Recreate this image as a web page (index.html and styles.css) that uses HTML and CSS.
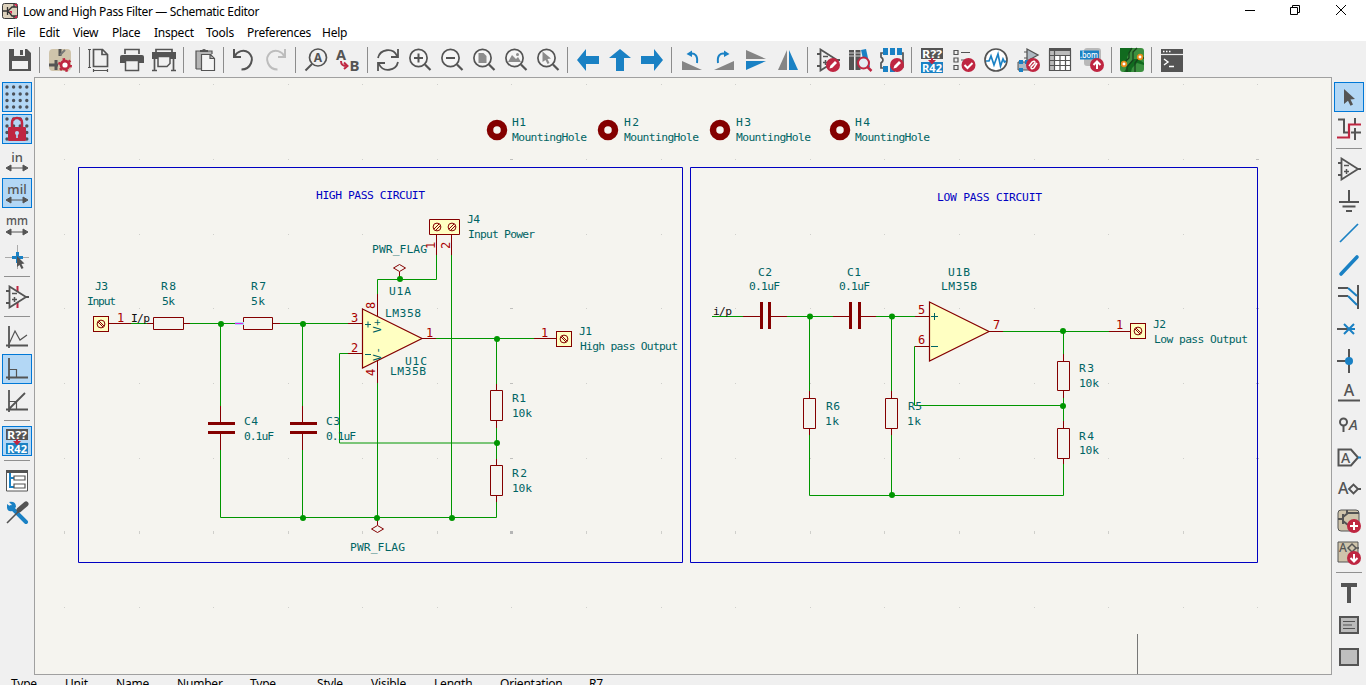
FILE: index.html
```html
<!DOCTYPE html>
<html lang="en">
<head>
<meta charset="utf-8">
<title>Low and High Pass Filter — Schematic Editor</title>
<link rel="stylesheet" href="styles.css">
</head>
<body>
<svg class="defs" width="0" height="0" aria-hidden="true">
  <symbol id="lens" viewBox="0 0 24 24"><circle cx="10.500" cy="10" r="8.600" fill="#f5f5f5" stroke="#545454" stroke-width="1.700"/><path d="M17 16.500 22.500 22" stroke="#545454" stroke-width="2.200" fill="none"/></symbol>
  <symbol id="opamp" viewBox="0 0 24 24"><path d="M4.500 1.500 21 12 4.500 22.500ZM1 6h3.500M1 18h3.500M21 12h3" fill="none" stroke="#545454" stroke-width="1.800"/><path d="M7 8.500h5M7 14.500h5M9.500 12v5" stroke="#545454" stroke-width="1.500"/></symbol>
  <symbol id="pencil" viewBox="0 0 24 24"><circle cx="17" cy="17" r="7" fill="#bf2641"/><path d="m13.500 20.500.8-2.800 4.700-4.700 2 2-4.700 4.700Z" fill="#fff"/></symbol>
  <symbol id="span" viewBox="0 0 24 24"><path d="M3 18h18M1 18l5-3v6ZM23 18l-5-3v6Z" fill="#545454" stroke="#545454" stroke-width="1"/></symbol>
  <symbol id="screw" viewBox="0 0 16 16"><rect x=".5" y=".5" width="15" height="15" class="body"/><circle cx="8" cy="8" r="3.900" class="pin"/><path d="m5 6 5 5M6 5l5 5" class="pin"/></symbol>
</svg>
<div class="window">
  <header class="titlebar">
    <svg class="appicon" viewBox="0 0 16 16"><rect x=".5" y=".5" width="15" height="15" rx="2" fill="#ddd2bd" stroke="#3b3b3b"/><path d="M1 8h4M5.500 4v8M6 8l4-4h5M6 8l4 5h5M12 4V1M12 13v2" stroke="#333" fill="none" stroke-width="1.300"/><path d="M12 1h3v3zM12 15h3v-3zM7 8h3v3z" fill="#d51d4b"/></svg>
    <span class="title">Low and High Pass Filter — Schematic Editor</span>
    <div class="winbtns">
      <svg viewBox="0 0 12 12"><path d="M2 6.500h10"/></svg>
      <svg viewBox="0 0 12 12"><path d="M1.500 3.500h7v7h-7zM3.500 3.500v-2h7v7h-2"/></svg>
      <svg viewBox="0 0 12 12"><path d="m1 1 10 10M11 1 1 11"/></svg>
    </div>
  </header>
  <nav class="menubar">
    <span class="m-file">File</span><span class="m-edit">Edit</span><span class="m-view">View</span><span class="m-place">Place</span><span class="m-inspect">Inspect</span><span class="m-tools">Tools</span><span class="m-prefs">Preferences</span><span class="m-help">Help</span>
  </nav>
  <div class="toolbar">
    <svg viewBox="0 0 24 24"><path d="M1 1h18l4 4v18H1z" fill="#545454"/><path d="M6 1h11v7H6zM4 13h16v8H4z" fill="#f0f0f0"/><path d="M12 2h3v5h-3z" fill="#545454"/></svg>
    <i class="sep"></i>
    <svg viewBox="0 0 24 24"><rect x="1" y="1" width="22" height="22" rx="4" fill="#cfc4ab"/><path d="M12 1v7M1 17h9M8 12v10" stroke="#545454" stroke-width="3"/><path d="M12 7l5-5" stroke="#777" stroke-width="2"/><circle cx="17" cy="17" r="4" fill="#fff" stroke="#bf2641" stroke-width="2.800"/><circle cx="17" cy="17" r="6" fill="none" stroke="#bf2641" stroke-width="2" stroke-dasharray="2.500 3.780"/></svg>
    <i class="sep"></i>
    <svg viewBox="0 0 24 24"><path d="M5.500 1.500h9l5 5v12h-14zM14 1.500v5h5.500" class="ln"/><path d="M1.500 1v19M0 1.500h3M0 19.500h3M5 22.500h15M5.500 21v3M19.500 21v3" class="th"/></svg>
    <svg viewBox="0 0 24 24"><path d="M5 6V1.500h14V6" class="ln"/><path d="M2 7h20q2 0 2 2v6H0V9q0-2 2-2z" fill="#545454"/><path d="M5.500 12.500h13v10h-13z" fill="#f0f0f0" stroke="#545454" stroke-width="1.500"/></svg>
    <svg viewBox="0 0 24 24"><path d="M4 5V1.500h16V5M2.500 10v13M21.500 10v13M0 22.500h5M19 22.500h5" class="ln"/><path d="M0 4h24v7H0z" fill="#545454"/><path d="M6 8.500h12v7l-3 3H6z" fill="#f0f0f0" stroke="#545454" stroke-width="1.500"/></svg>
    <i class="sep"></i>
    <svg viewBox="0 0 24 24"><path d="M4 3h16v18H4z" fill="#b5b5b5"/><path d="M4 21V3h16v3M4 21h5" class="th"/><path d="M8 4V2h2q2-2 4 0h2v2z" fill="#545454"/><path d="M9.500 6.500h9l4 4v12h-13zM18 6.500v4h4.500" fill="#f4f4f4" stroke="#545454" stroke-width="1.200"/></svg>
    <i class="sep"></i>
    <svg viewBox="0 0 24 24"><path d="M2 1v8h7M2.500 8.500C5 3 12 1 16.500 4.500c7 6 2 17-7 17" class="u"/></svg>
    <svg viewBox="0 0 24 24"><path d="M21 1v8h-7M20.500 8.500C18 3 11 1 6.500 4.500c-7 6-2 17 7 17" class="u dis"/></svg>
    <i class="sep"></i>
    <svg viewBox="0 0 24 24"><circle cx="14" cy="9.500" r="8.500" class="ln"/><path d="m8 16-6.500 6.500" stroke="#545454" stroke-width="2"/><text x="14" y="14" text-anchor="middle" class="ic-b" font-size="12">A</text></svg>
    <svg viewBox="0 0 24 24"><text x="0" y="11.500" class="ic-b" font-size="14.500">A</text><text x="13.500" y="23" class="ic-b" font-size="15">B</text><path d="M5 13c0 4 2 5 6 5M8 14.500 11.500 18 8 21" fill="none" stroke="#bf2641" stroke-width="2"/></svg>
    <i class="sep"></i>
    <svg viewBox="0 0 24 24"><path d="M2 10C4 1 17-1 21 8M22 1v8h-7M22 14c-2 9-15 11-19 2M2 23v-8h7" class="u2"/></svg>
    <svg viewBox="0 0 24 24"><use href="#lens"/><path d="M6 10h9M10.500 5.500v9" stroke="#545454" stroke-width="2"/></svg>
    <svg viewBox="0 0 24 24"><use href="#lens"/><path d="M6 10h9" stroke="#545454" stroke-width="2"/></svg>
    <svg viewBox="0 0 24 24"><use href="#lens"/><path d="M6.500 5h5l3 3v7h-8z" fill="#8c8c8c"/></svg>
    <svg viewBox="0 0 24 24"><use href="#lens"/><path d="M4 14 8 7l4 4 2-2 3 5z" fill="#8c8c8c"/><circle cx="13.500" cy="6.500" r="1.500" fill="#8c8c8c"/></svg>
    <svg viewBox="0 0 24 24"><use href="#lens"/><path d="m6.500 3.500 8.500 7-3.500.5 2 4-2 1-2-4-3 2z" fill="#8c8c8c"/></svg>
    <i class="sep"></i>
    <svg viewBox="0 0 24 24"><path d="M1 12 10 1v7h13v8H10v7z" class="bl"/></svg>
    <svg viewBox="0 0 24 24"><path d="m12 1 11 9h-7v13H8V10H1z" class="bl"/></svg>
    <svg viewBox="0 0 24 24"><path d="M23 12 14 1v7H1v8h13v7z" class="bl"/></svg>
    <i class="sep"></i>
    <svg viewBox="0 0 24 24"><path d="M2 13v9h20z" fill="#858585"/><path d="M9 6c6-2 9 2 8 9" class="bs"/><path d="M6.500 6 12 2.500V9z" class="bl"/></svg>
    <svg viewBox="0 0 24 24"><path d="M22 13v9H2z" fill="#858585"/><path d="M14 6C8 4 5 8 6 15" class="bs"/><path d="M17.500 6 12 2.500V9z" class="bl"/></svg>
    <svg viewBox="0 0 24 24"><path d="M2 2v9h20z" fill="#858585"/><path d="M2 22v-9h20z" class="bl"/></svg>
    <svg viewBox="0 0 24 24"><path d="M11 2v20H2z" fill="#858585"/><path d="M13 2v20h9z" class="bl"/></svg>
    <i class="sep"></i>
    <svg viewBox="0 0 24 24"><use href="#opamp"/><use href="#pencil"/></svg>
    <svg viewBox="0 0 24 24"><path d="M1 2h5v20H1zM7.500 2h5v20h-5z" fill="#545454"/><path d="M1 5h12M1 8h12" stroke="#ccc"/><path d="m13 2 5-1 4 18-5 1z" fill="#1a81c4"/><circle cx="15.500" cy="15" r="5.500" fill="#e5edf3" stroke="#bf2641" stroke-width="2"/><path d="m19.500 19 4 4" stroke="#bf2641" stroke-width="2.500"/></svg>
    <svg viewBox="0 0 24 24"><path d="M3 5H1v4q4 3 0 6v5h2M21 5h2v14h-2" class="ln"/><path d="M3 0h5v7H3zM10 0h5v7h-5zM17 0h5v7h-5zM3 18h5v6H3zM10 18h5v6h-5z" class="bl"/><use href="#pencil"/></svg>
    <i class="sep"></i>
    <svg viewBox="0 0 24 24"><path d="M1 0h22v11H1z" fill="#545454"/><path d="M1 14h22v11H1z" fill="#1a81c4"/><path d="M11 10h2v2h3l-4 4.500-4-4.500h3z" fill="#bf2641"/><text x="2" y="9.500" class="ic-b wh" font-size="11" textLength="20" lengthAdjust="spacingAndGlyphs">R??</text><text x="2" y="23.500" class="ic-b wh" font-size="11" textLength="20" lengthAdjust="spacingAndGlyphs">R42</text></svg>
    <svg viewBox="0 0 24 24"><path d="M2 2.500h4v4H2zM2 10h4v4H2zM2 17.500h4v4H2zM9 4.500h9M9 12h6" class="th"/><circle cx="16.500" cy="17" r="7" fill="#bf2641"/><path d="m12.500 17 3 3 5-5" stroke="#fff" stroke-width="2" fill="none"/></svg>
    <svg viewBox="0 0 24 24"><circle cx="12" cy="12" r="11" fill="#fff" stroke="#545454" stroke-width="1.700"/><path d="M2 13h3l2-5 3 9 4-11 2.500 12 2.500-7 1.500 3 1.500-1" fill="none" stroke="#1a81c4" stroke-width="1.700"/></svg>
    <svg viewBox="0 0 24 24"><path d="m11 1 11 6-11 6z" fill="#aeb9c2" stroke="#545454" stroke-width="1.300"/><path d="M8 4h3M8 10h3" class="th"/><path d="M2 14h14v8H2z" fill="#aeb9c2" stroke="#545454"/><path d="M3 12h4v4H3zM9 12h4v4H9zM3 20h4v4H3z" class="bl"/><circle cx="17" cy="17" r="7" fill="#bf2641"/><path d="m13 18 3-4q3-2 3 1l-2 2M21 15l-3 5q-3 2-3-1l2-2" fill="none" stroke="#fff" stroke-width="1.500"/></svg>
    <svg viewBox="0 0 24 24"><path d="M1.500 1.500h21v21h-21z" fill="#fff"/><path d="M1 1h22v6H1zM1 7h5v16H1z" fill="#bbb"/><path d="M1.500 2h21v20.500h-21zM1.500 7.500h21M1.500 12.500h21M1.500 17.500h21M6.500 2v20M12 7v15M17.500 7v15" class="th"/><path d="M1 1.500h22" stroke="#545454" stroke-width="3"/></svg>
    <svg viewBox="0 0 24 24"><rect x="4" y="0" width="17" height="18" rx="3" fill="#b9b9b9"/><path d="M0 2.500h19v9H0z" class="bl"/><text x="0" y="10" class="ic wh" font-size="9.500" textLength="18" lengthAdjust="spacingAndGlyphs">.bom</text><circle cx="17" cy="17" r="7" fill="#bf2641"/><path d="M17 21v-7M13.500 17l3.500-3.500 3.500 3.500" stroke="#fff" stroke-width="2" fill="none"/></svg>
    <i class="sep"></i>
    <svg viewBox="0 0 24 24"><rect x="0" y="0" width="24" height="24" rx="3" fill="#3c9040"/><path d="M0 0h12l-5 9v4l-4 3-3 1zM4 24l5-8 5-5h4l6 4v2l-7-2-5 5-1 4z" fill="#116b1f"/><path d="m4 15 5-5V5l3-5M7 24v-5l6-7V4l4-4M24 10h-5l-4 5v9" fill="none" stroke="#17421c" stroke-width="1.300"/><circle cx="4" cy="16" r="2.300" fill="#fff" stroke="#ea8b18" stroke-width="1.700"/><circle cx="20" cy="9" r="2.300" fill="#fff" stroke="#ea8b18" stroke-width="1.700"/></svg>
    <i class="sep"></i>
    <svg viewBox="0 0 24 24"><path d="M1 1h22v23H1z" fill="#545454"/><path d="M1 6.500h22" stroke="#eee" stroke-width="1.200"/><path d="M3 3.500h1.500m1.500 0h1.500m1.500 0h1.500" stroke="#fff" stroke-width="1.500"/><path d="m4 11 4 3-4 3M9 18.500h5" fill="none" stroke="#fff" stroke-width="1.400"/></svg>
  </div>
  <main class="work">
    <aside class="side">
      <b class="on"><svg viewBox="0 0 24 24"><path d="M2 2h21M2 9h21M2 15.500h21M2 22h21" stroke="#4b5159" stroke-width="3.400" stroke-linecap="round" stroke-dasharray="0 6.600"/></svg></b>
      <b class="on"><svg viewBox="0 0 24 24"><path d="M2 2h21M2 9h21M2 15.500h21M2 22h21" stroke="#4b5159" stroke-width="3.400" stroke-linecap="round" stroke-dasharray="0 6.600"/><path d="M7 12V6q0-5 5-5t5 5v6" fill="none" stroke="#bf2641" stroke-width="2.500"/><rect x="3" y="10" width="18" height="14" rx="1" fill="#bf2641"/><circle cx="12" cy="16" r="2" fill="#b3d7f5"/><path d="M12 17v4" stroke="#b3d7f5" stroke-width="1.700"/></svg></b>
      <b><svg viewBox="0 0 24 24"><text x="12" y="13" text-anchor="middle" class="ic" font-size="13">in</text><use href="#span" y="1"/></svg></b>
      <b class="on"><svg viewBox="0 0 24 24"><text x="12" y="13" text-anchor="middle" class="ic" font-size="13">mil</text><use href="#span" y="1"/></svg></b>
      <b><svg viewBox="0 0 24 24"><text x="1" y="12" class="ic" font-size="13" textLength="22" lengthAdjust="spacingAndGlyphs">mm</text><use href="#span" y="1"/></svg></b>
      <b><svg viewBox="0 0 24 24"><path d="M12.500 0v24M0 12.500h24" stroke="#aaa"/><path d="M12.500 7v11M7 12.500h11" stroke="#1a81c4" stroke-width="3"/><path d="m12 11 7.500 7.500-3 .5 2 4-2 1-2-4-2.500 2z" fill="#545454"/></svg></b>
      <hr>
      <b><svg viewBox="0 0 24 24"><path d="M12.500 1v6M12.500 17v6" stroke="#bf2641" stroke-width="2"/><use href="#opamp"/></svg></b>
      <hr>
      <b><svg viewBox="0 0 24 24"><path d="M4 1v22M1 20.500h22" stroke="#545454" stroke-width="1.800"/><path d="m4 19 6-13 5 9 7-5" class="th"/></svg></b>
      <b class="on"><svg viewBox="0 0 24 24"><path d="M4 1v22M1 20.500h22" stroke="#545454" stroke-width="1.800"/><path d="M4 12.500h7.500v8" class="th"/></svg></b>
      <b><svg viewBox="0 0 24 24"><path d="M4 1v22M1 20.500h22M4 20 20 4" stroke="#545454" stroke-width="1.800"/><path d="M4 12.500h7.500v8" class="th"/></svg></b>
      <hr>
      <b class="on"><svg viewBox="0 0 24 24"><path d="M1 0h22v11H1z" fill="#545454"/><path d="M1 14h22v11H1z" fill="#1a81c4"/><path d="M11 10h2v2h3l-4 4.500-4-4.500h3z" fill="#bf2641"/><text x="2" y="9.500" class="ic-b wh" font-size="11" textLength="20" lengthAdjust="spacingAndGlyphs">R??</text><text x="2" y="23.500" class="ic-b wh" font-size="11" textLength="20" lengthAdjust="spacingAndGlyphs">R42</text></svg></b>
      <hr>
      <b><svg viewBox="0 0 24 24"><path d="M1.500 2h21v20h-21z" fill="#fff" stroke="#545454"/><path d="M1 2.500h22" stroke="#545454" stroke-width="3"/><path d="M5 4v14h4M5 9h4" fill="none" stroke="#1a81c4" stroke-width="2"/><path d="M9 7h11v4H9zM9 15h11v4H9z" class="th"/></svg></b>
      <b><svg viewBox="0 0 24 24"><path d="m6 6 15 15" stroke="#1a81c4" stroke-width="4" stroke-linecap="round"/><path d="M2 7V3l4 3 1-2-3-3q7-1 7 5l-4 4q-4 1-5-3z" class="bl"/><path d="M2 22 15 9" stroke="#545454" stroke-width="1.600"/><path d="m14 9 7-6" stroke="#545454" stroke-width="5" stroke-linecap="round"/></svg></b>
    </aside>
    <section class="canvas">
      <svg viewBox="35 78 1296 596" class="sheet">
        <g class="grid"><path d="M64 84.500h1197M64 159.500h1197M64 234.500h1197M64 308.500h1197M64 383.500h1197M64 458.500h1197M64 607.500h1197"/><path d="M64 532.500h1197" class="g3"/></g>
        <path class="axis" d="M510 159.500h3M510 234.500h3M510 308.500h3M510 383.500h3M510 458.500h3M1256 159.500h3M1256 308.500h3M1256 383.500h3M1256 458.500h3"/><path d="M510 531h3v3h-3z" fill="#b5b5b5"/>
        <path class="frame" d="M78.500 167.500h604v395h-604zM690.500 167.500h567v395h-567z"/>
        <g class="hole"><circle cx="497" cy="130" r="7"/><circle cx="608" cy="130" r="7"/><circle cx="720" cy="130" r="7"/><circle cx="840" cy="130" r="7"/></g>

        <!-- op-amp bodies -->
        <path class="body amp" d="M362.500 309 422 338.500 362.500 368zM929.500 302 989 331.500 929.500 361z"/>

        <!-- wires -->
        <path class="wire" d="M131 323.500h16M190 323.500h46M280 323.500h68M220.500 324v82M302.500 324v82M220.500 450v67.500h276V502M302.500 450v67M348 353.500h-8.500v89.500h157M436 338.500h98M377.500 294v-14.500h59V255M451.500 255v262M377.500 383v134M496.500 339v45M496.500 428v31"/>
        <path class="wire" d="M712 316.500h31M787 316.500h46M876 316.500h39M809.500 317v74M809.500 435v60.500h254V464M891.500 317v74M891.500 435v60M915 346.500h-.5v59h149M1003 331.500h106M1063.500 332v22M1063.500 398v23"/>

        <!-- pins and component outlines -->
        <path class="pin" d="M109 323.500h22M147 323.500h6M184 323.500h6M273 323.500h7M348 323.500h14M348 353.500h14M422 338.500h14M534 338.500h22M377.500 294v22M377.500 361v22M436.500 235v20M451.500 235v20M220.500 406v16M220.500 434v16M302.500 406v16M302.500 434v16M496.500 384v6M496.500 421v7M496.500 459v6M496.500 496v6M399.500 272v6M377.500 518v7"/>
        <path class="pin" d="M153.500 317.500h30v12h-30zM243.500 317.500h29v12h-29zM490.500 390.500h12v30h-12zM490.500 465.500h12v30h-12z"/>
        <path class="pin" d="M743 316.500h17M771 316.500h16M833 316.500h16M861 316.500h15M915 316.500h14M915 346.500h14M989 331.500h14M1109 331.500h21M809.500 391v7M809.500 429v6M891.500 391v7M891.500 429v6M1063.500 354v7M1063.500 391v7M1063.500 421v7M1063.500 459v5"/>
        <path class="pin" d="M803.500 398.500h12v30h-12zM885.500 398.500h12v30h-12zM1057.500 361.500h12v29h-12zM1057.500 428.500h12v30h-12z"/>
        <path class="plate" d="M208 423.500h27M208 432.500h27M290 423.500h27M290 432.500h27M761.500 302v27M769.500 302v27M850.500 302v27M859.500 302v27"/>
        <path class="pin" d="m393.500 268 6-3.500 6 3.500-6 3.500zM371.500 529l6-3.500 6 3.500-6 3.500z"/>
        <path d="M235 323.500h9" stroke="#a8dcf5" stroke-width="3"/><path d="M235 323.500h8" stroke="#e61ee6"/>
        <use href="#screw" x="93" y="316" width="16" height="16"/>
        <use href="#screw" x="556" y="331" width="16" height="16"/>
        <use href="#screw" x="1130" y="323" width="16" height="16"/>
        <path class="body" d="M429.500 219.500h30v15h-30z"/>
        <g class="pin"><circle cx="437" cy="227" r="3.900"/><circle cx="452" cy="227" r="3.900"/><path d="m434 229 5-5M435.500 230.500l5-5M449 229l5-5M450.500 230.500l5-5"/></g>
        <g class="dot"><circle cx="221" cy="324" r="3"/><circle cx="303" cy="324" r="3"/><circle cx="400" cy="279" r="3"/><circle cx="497" cy="339" r="3"/><circle cx="497" cy="443" r="3"/><circle cx="303" cy="518" r="3"/><circle cx="377" cy="518" r="3"/><circle cx="452" cy="518" r="3"/><circle cx="810" cy="316.500" r="3"/><circle cx="892" cy="316.500" r="3"/><circle cx="892" cy="495" r="3"/><circle cx="1063" cy="331" r="3"/><circle cx="1063" cy="406" r="3"/></g>
        <path class="sign" d="M365 324.500h6M368 321.500v6M365 354.500h6M931 316.500h7M934.500 313v7M931 346.500h7"/>

        <g class="t note"><text x="316" y="199" textLength="109">HIGH PASS CIRCUIT</text><text x="937" y="201" textLength="105">LOW PASS CIRCUIT</text></g>
        <g class="t">
          <text x="512" y="126" textLength="14">H1</text><text x="512" y="141" textLength="75">MountingHole</text>
          <text x="624" y="126" textLength="15">H2</text><text x="624" y="141" textLength="75">MountingHole</text>
          <text x="736" y="126" textLength="15">H3</text><text x="736" y="141" textLength="75">MountingHole</text>
          <text x="855" y="126" textLength="15">H4</text><text x="855" y="141" textLength="75">MountingHole</text>
          <text x="95" y="290" textLength="13">J3</text><text x="87" y="305" textLength="29">Input</text>
          <text x="161" y="290" textLength="15">R8</text><text x="162" y="305" textLength="13">5k</text>
          <text x="251" y="290" textLength="15">R7</text><text x="251" y="305" textLength="14">5k</text>
          <text x="244" y="425" textLength="14">C4</text><text x="244" y="440" textLength="30">0.1uF</text>
          <text x="326" y="425" textLength="14">C3</text><text x="326" y="440" textLength="30">0.1uF</text>
          <text x="467" y="223" textLength="13">J4</text><text x="468" y="238" textLength="67">Input Power</text>
          <text x="372" y="253" textLength="55">PWR_FLAG</text><text x="350" y="551" textLength="55">PWR_FLAG</text>
          <text x="389" y="295" textLength="22">U1A</text><text x="385" y="317" textLength="36">LM358</text>
          <text x="405" y="365" textLength="22">U1C</text><text x="390" y="375" textLength="36">LM35B</text>
          <text x="579" y="335" textLength="13">J1</text><text x="580" y="350" textLength="98">High pass Output</text>
          <text x="512" y="402" textLength="14">R1</text><text x="512" y="417" textLength="20">10k</text>
          <text x="512" y="477" textLength="15">R2</text><text x="512" y="492" textLength="20">10k</text>
          <text x="758" y="276" textLength="14">C2</text><text x="749" y="290" textLength="31">0.1uF</text>
          <text x="847" y="276" textLength="14">C1</text><text x="839" y="290" textLength="31">0.1uF</text>
          <text x="948" y="276" textLength="22">U1B</text><text x="941" y="290" textLength="36">LM35B</text>
          <text x="826" y="410" textLength="14">R6</text><text x="825" y="425" textLength="14">1k</text>
          <text x="908" y="410" textLength="14">R5</text><text x="907" y="425" textLength="14">1k</text>
          <text x="1079" y="372" textLength="15">R3</text><text x="1079" y="387" textLength="20">10k</text>
          <text x="1079" y="440" textLength="15">R4</text><text x="1079" y="454" textLength="20">10k</text>
          <text x="1153" y="328" textLength="13">J2</text><text x="1154" y="343" textLength="94">Low pass Output</text>
          <text transform="translate(381 333) rotate(-90)" textLength="14">V+</text><text transform="translate(381 361) rotate(-90)" textLength="14">V-</text>
        </g>
        <g class="t num">
          <text x="117" y="322">1</text><text x="351" y="322">3</text><text x="351" y="352">2</text><text x="426" y="337">1</text><text x="541" y="337">1</text>
          <text x="918" y="314">5</text><text x="918" y="344">6</text><text x="993" y="329">7</text><text x="1116" y="329">1</text>
          <text transform="translate(375 309) rotate(-90)">8</text><text transform="translate(375 376) rotate(-90)">4</text><text transform="translate(435 249) rotate(-90)">1</text><text transform="translate(450 249) rotate(-90)">2</text>
        </g>
        <g class="t net"><text x="131" y="322" textLength="19">I/p</text><text x="713" y="315" textLength="19">i/p</text></g>
        <path d="M1137.500 634v40" stroke="#777"/>
      </svg>
    </section>
    <aside class="side right">
      <b class="on"><svg viewBox="0 0 24 24"><path d="m7 4 11 10-4.500.5 2.500 5-2.500 1.300-2.500-5L7 19z" fill="#545454"/></svg></b>
      <b><svg viewBox="0 0 24 24"><path d="M1 2.500h6v13h4M18 1v6M18 11v12M14 15.500h10" fill="none" stroke="#545454" stroke-width="2"/><path d="M0 20.500h12v-13h12" fill="none" stroke="#bf2641" stroke-width="2.200"/></svg></b>
      <hr>
      <b><svg viewBox="0 0 24 24"><use href="#opamp"/></svg></b>
      <b><svg viewBox="0 0 24 24"><path d="M12 1v11M2 13h20M5.500 17.500h13M9 22h6" stroke="#545454" stroke-width="2"/></svg></b>
      <b><svg viewBox="0 0 24 24"><path d="M3 21 21 3" stroke="#1a81c4" stroke-width="1.700"/></svg></b>
      <b><svg viewBox="0 0 24 24"><path d="M4 21 20 4" stroke="#1a81c4" stroke-width="3.600" stroke-linecap="round"/></svg></b>
      <b><svg viewBox="0 0 24 24"><path d="M1 3h10M1 11h10M21 0v24" stroke="#545454" stroke-width="2"/><path d="m11 3 9 8M11 11l9 9" stroke="#1a81c4" stroke-width="2"/></svg></b>
      <b><svg viewBox="0 0 24 24"><path d="M0 12h12" stroke="#545454" stroke-width="2"/><path d="m7 7 10 10M17 7 7 17M12 12h6" stroke="#1a81c4" stroke-width="2"/></svg></b>
      <b><svg viewBox="0 0 24 24"><path d="M12 0v24M0 12h12" stroke="#545454" stroke-width="2"/><circle cx="12" cy="12" r="4" class="bl"/></svg></b>
      <b><svg viewBox="0 0 24 24"><text x="12" y="15" text-anchor="middle" class="ic" font-size="16">A</text><path d="M1 19.500h22" stroke="#545454" stroke-width="2"/></svg></b>
      <b><svg viewBox="0 0 24 24"><circle cx="6.500" cy="9" r="3.500" fill="none" stroke="#545454" stroke-width="2"/><path d="M6.500 13v6" stroke="#545454" stroke-width="2"/><text x="12" y="17" class="ic it" font-size="15">A</text></svg></b>
      <b><svg viewBox="0 0 24 24"><path d="M1.500 4.500H14l7 8-7 8H1.500z" fill="none" stroke="#545454" stroke-width="2"/><path d="M21 12.500h3" stroke="#1a81c4" stroke-width="2"/><text x="4" y="17.500" class="ic" font-size="14">A</text></svg></b>
      <b><svg viewBox="0 0 24 24"><text x="1" y="17" class="ic" font-size="16">A</text><path d="m12 12 4.500-4.500L21 12l-4.500 4.500zM21 12h3" fill="none" stroke="#545454" stroke-width="1.900"/></svg></b>
      <b><svg viewBox="0 0 24 24"><rect x="1" y="1" width="21" height="21" rx="3" fill="#cfc4ab" stroke="#545454"/><path d="M1 10h5M6 5v10M6 8l5-4h11M6 12l5 4M10 4V1" fill="none" stroke="#545454" stroke-width="2"/><circle cx="17" cy="17" r="7" fill="#bf2641"/><path d="M13 17h8M17 13v8" stroke="#fff" stroke-width="2"/></svg></b>
      <b><svg viewBox="0 0 24 24"><path d="M1 1h20v20H1z" fill="#cfc4ab" stroke="#545454"/><text x="2" y="11" class="ic" font-size="12">A</text><path d="m11 7 4-4 4 4-4 4zM19 7h3" fill="none" stroke="#545454" stroke-width="1.500"/><circle cx="17" cy="17" r="7" fill="#bf2641"/><path d="M17 13v7M13.500 17l3.500 3.500 3.500-3.500" stroke="#fff" stroke-width="2" fill="none"/></svg></b>
      <hr>
      <b><svg viewBox="0 0 24 24"><path d="M4 2h16v4h-6v16h-4V6H4z" fill="#545454"/></svg></b>
      <b><svg viewBox="0 0 24 24"><path d="M3 4h18v16H3z" fill="#bbb" stroke="#545454" stroke-width="2"/><path d="M6 8.500h12M6 12h9M6 15.500h12" class="th"/></svg></b>
      <b><svg viewBox="0 0 24 24"><path d="M3 4h18v16H3z" fill="#bfbfbf" stroke="#545454" stroke-width="2"/></svg></b>
    </aside>
  </main>
  <footer class="info">
    <span class="c1">Type</span><span class="c2">Unit</span><span class="c3">Name</span><span class="c4">Number</span><span class="c5">Type</span><span class="c6">Style</span><span class="c7">Visible</span><span class="c8">Length</span><span class="c9">Orientation</span><span>R7</span>
  </footer>
</div>
</body>
</html>
```
FILE: styles.css
```css
* { box-sizing: border-box; }
body { margin: 0; overflow: hidden; font-family: "Noto Sans", "Open Sans", sans-serif; font-size: 11.5px; color: #000; }
.defs { position: absolute; }
.window { width: 1366px; height: 685px; display: flex; flex-direction: column; background: #f0f0f0; overflow: hidden; }

.titlebar { height: 23px; flex: none; display: flex; align-items: center; background: #fff; padding-left: 2px; }
.appicon { width: 16px; height: 16px; margin: -1px 5px 0 0; }
.title { font-size: 12px; letter-spacing: -0.33px; white-space: nowrap; }
.winbtns { display: flex; gap: 34px; margin-left: auto; padding-right: 19px; margin-top: -3px; }
.winbtns svg { width: 12px; height: 12px; fill: none; stroke: #000; }

.menubar { height: 18px; flex: none; display: flex; background: #fff; padding-left: 7px; line-height: 19px; font-size: 12px; letter-spacing: -0.25px; }
.m-file { width: 32px; }
.m-edit { width: 34px; }
.m-view { width: 39px; }
.m-place { width: 42px; }
.m-inspect { width: 52px; }
.m-tools { width: 41px; }
.m-prefs { width: 75px; }

.toolbar { height: 36px; flex: none; display: flex; align-items: flex-start; padding: 7px 0 0 4px; }
.toolbar > svg { width: 24px; height: 24px; margin: 0 4px; flex: none; overflow: visible; }
.sep { width: 1px; height: 26px; margin: -1px 4px 0 3px; background: #8c8c8c; flex: none; }

.work { height: 598px; flex: none; display: flex; }
.side { width: 34px; flex: none; padding: 5px 2px 0; }
.side b { display: flex; width: 30px; height: 30px; margin-bottom: 2px; align-items: center; justify-content: center; border: 1px solid transparent; }
.side b.on { background: #b3d7f5; border-color: #0078d7; }
.side svg { width: 24px; height: 24px; flex: none; overflow: visible; }
.side hr { width: 26px; height: 1px; border: 0; margin: 4px 2px 5px; background: #909090; }
.canvas { width: 1298px; flex: none; border: 1px solid #a0a0a0; background: #f5f4ef; }
.sheet { display: block; width: 1296px; height: 596px; }

.info { flex: none; height: 10px; display: flex; padding-left: 11px; line-height: 17px; font-size: 12px; letter-spacing: -0.2px; }
.info span { flex: none; }
.c1 { width: 54px; }
.c2 { width: 51px; }
.c3 { width: 61px; }
.c4 { width: 73px; }
.c5 { width: 67px; }
.c6 { width: 54px; }
.c7 { width: 63px; }
.c8 { width: 66px; }
.c9 { width: 89px; }

/* icon strokes */
.ln { fill: none; stroke: #545454; stroke-width: 1.7; }
.th { fill: none; stroke: #545454; stroke-width: 1.2; }
.u { fill: none; stroke: #545454; stroke-width: 2; }
.u2 { fill: none; stroke: #545454; stroke-width: 1.8; }
.dis { stroke: #bdbdbd; }
.bl { fill: #1a81c4; }
.bs { fill: none; stroke: #1a81c4; stroke-width: 2; }
.ic { font-family: "Noto Sans", sans-serif; font-weight: 500; fill: #545454; }
.it { font-style: italic; }
.ic-b { font-family: "Noto Sans", sans-serif; font-weight: 700; fill: #545454; }
.wh { fill: #fff; }

/* schematic */
.grid path { fill: none; stroke: #cfcfcb; stroke-dasharray: 1 73.58; shape-rendering: crispEdges; }
.grid .g3 { stroke-width: 3; }
.axis { stroke: #c0c0bd; }
.frame { fill: none; stroke: #0000c2; }
.hole circle { fill: none; stroke: #840000; stroke-width: 6.5; }
.wire { fill: none; stroke: #009600; }
.pin { fill: none; stroke: #840000; }
.body { fill: #ffffc2; stroke: #840000; }
.amp { stroke-width: 1.2; }
.plate { stroke: #840000; stroke-width: 3; }
.dot { fill: #009600; }
.sign { stroke: #006464; }
.t { font-family: "DejaVu Sans Mono", monospace; font-size: 11.3px; fill: #006464; }
.note { fill: #0000c2; }
.num { fill: #a90000; font-size: 12px; }
.net { fill: #0f0f0f; }
```
